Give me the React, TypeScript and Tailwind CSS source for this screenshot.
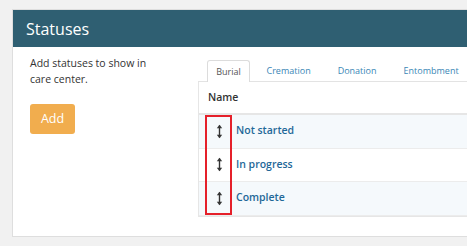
import { Fragment } from 'react';

const tabs = ['Burial', 'Cremation', 'Donation', 'Entombment'];
const statuses = ['Not started', 'In progress', 'Complete'];

function MoveIcon() {
  return (
    <svg width="7" height="15" viewBox="0 0 7 15" className="text-[#333]">
      <path d="M3.5 1.5v12" stroke="currentColor" strokeWidth="1.4" />
      <path d="M0.8 4.2L3.5 0.8L6.2 4.2Z" fill="currentColor" />
      <path d="M0.8 10.8L3.5 14.2L6.2 10.8Z" fill="currentColor" />
    </svg>
  );
}

export default function App() {
  return (
    <div className="h-[246px] w-[467px] overflow-hidden bg-[#f1f1f1] pl-[12px] pt-[9px] font-['Open_Sans',sans-serif]">
      <div className="w-[480px] border border-[#dedede] bg-white">
        <div className="flex h-[37px] items-center bg-[#2f5f72] px-[13px] text-[16px] text-white">
          Statuses
        </div>

        <div className="flex h-[189px]">
          {/* left column */}
          <div className="w-[185px] shrink-0 pl-[17px] pt-[8px]">
            <p className="text-[10.5px] leading-[16px] text-[#333]">
              Add statuses to show in
              <br />
              care center.
            </p>
            <button className="mt-[17px] h-[30px] w-[45px] rounded-[3px] bg-[#f1ad4e] text-[12.5px] text-white">
              Add
            </button>
          </div>

          {/* tabs + table */}
          <div className="flex-1 pt-[13px]">
            <div className="flex h-[22px] items-end border-b border-[#e3e3e3]">
              {tabs.map((t, i) =>
                i === 0 ? (
                  <div
                    key={t}
                    className="-mb-px mr-[3px] ml-[9px] flex h-[22px] w-[43px] items-center justify-center rounded-t-[3px] border border-b-0 border-[#dcdcdc] bg-white text-[9px] text-[#555]"
                  >
                    {t}
                  </div>
                ) : (
                  <div
                    key={t}
                    className="flex h-[21px] items-center px-[13.5px] text-[9px] text-[#3a87b6]"
                  >
                    {t}
                  </div>
                )
              )}
            </div>

            <div className="relative border-b border-l border-[#e6e6e6]">
              <div className="flex h-[33px] items-center border-b-2 border-[#e6e6e6] pl-[9px] text-[10.5px] font-semibold text-[#333]">
                Name
              </div>
              {statuses.map((s, i) => (
                <Fragment key={s}>
                  <div
                    className={`flex h-[33.5px] items-center border-b border-[#ececec] last:border-b-0 ${
                      i % 2 === 0 ? 'bg-[#f5f9fc]' : 'bg-white'
                    }`}
                  >
                    <div className="flex w-[33px] justify-center pl-[7px]">
                      <MoveIcon />
                    </div>
                    <div className="pl-[4px] text-[10.5px] font-semibold text-[#1f6898]">{s}</div>
                  </div>
                </Fragment>
              ))}
              <div className="pointer-events-none absolute left-[6px] top-[33px] h-[100px] w-[27px] border-2 border-[#e5202a]" />
            </div>
          </div>
        </div>
      </div>
    </div>
  );
}
